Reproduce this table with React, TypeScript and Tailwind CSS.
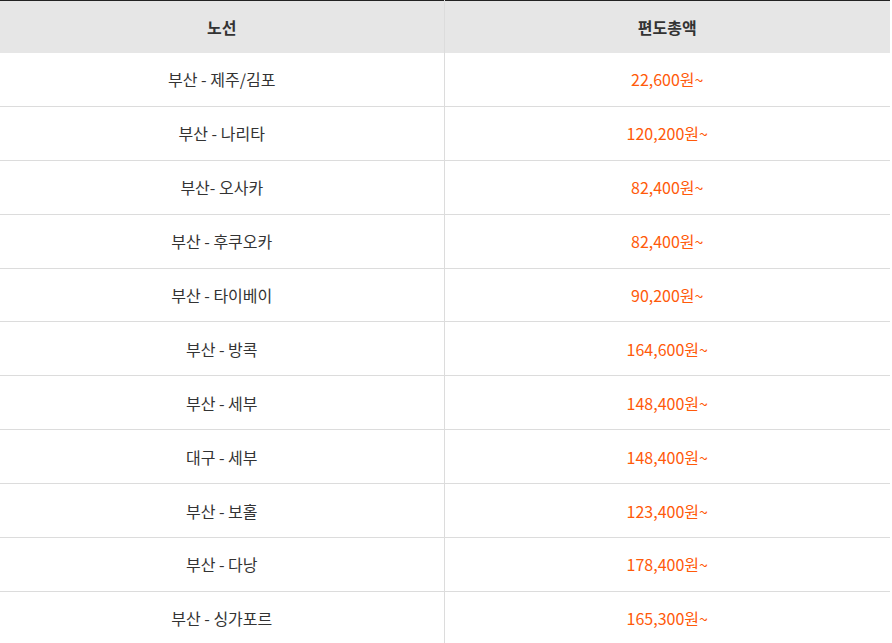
import React from 'react';

const routes: [string, string][] = [
  ['부산 - 제주/김포', '22,600원~'],
  ['부산 - 나리타', '120,200원~'],
  ['부산- 오사카', '82,400원~'],
  ['부산 - 후쿠오카', '82,400원~'],
  ['부산 - 타이베이', '90,200원~'],
  ['부산 - 방콕', '164,600원~'],
  ['부산 - 세부', '148,400원~'],
  ['대구 - 세부', '148,400원~'],
  ['부산 - 보홀', '123,400원~'],
  ['부산 - 다낭', '178,400원~'],
  ['부산 - 싱가포르', '165,300원~'],
];

export default function App() {
  return (
    <div className="w-[892px] h-[643px] overflow-hidden bg-white font-['Noto_Sans_CJK_KR',sans-serif]">
      <table className="w-[890px] border-collapse table-fixed text-[16px]">
        <thead>
          <tr className="bg-[#e6e6e6] border-t border-[#222]">
            <th className="h-[52px] w-[444px] border-r border-[#dcdcdc] font-bold text-[#333]">노선</th>
            <th className="h-[52px] font-bold text-[#333]">편도총액</th>
          </tr>
        </thead>
        <tbody>
          {routes.map(([route, price], i) => (
            <tr key={i} className="border-b border-[#dcdcdc]">
              <td className="h-[53.9px] border-r border-[#dcdcdc] text-center text-[#333]">{route}</td>
              <td className="h-[53.9px] text-center text-[#ff5a0a]">{price}</td>
            </tr>
          ))}
        </tbody>
      </table>
    </div>
  );
}
